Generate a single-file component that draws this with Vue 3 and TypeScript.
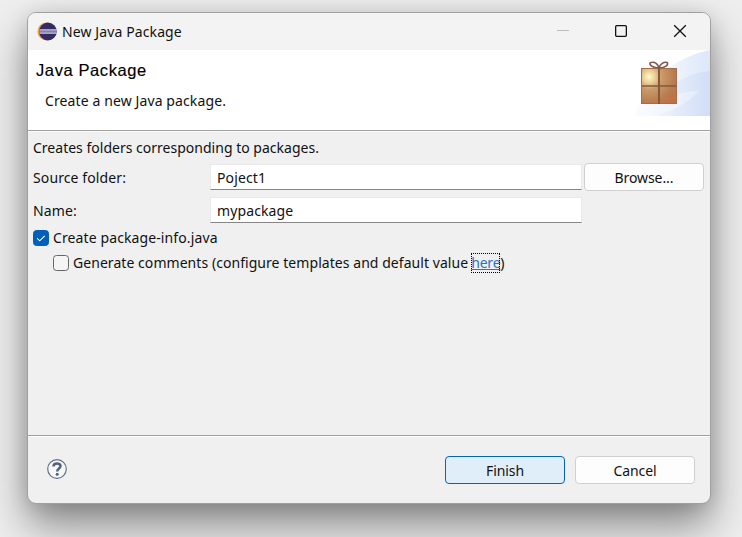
<script setup lang="ts">
import { ref } from 'vue'

const sourceFolder = ref('Poject1')
const packageName = ref('mypackage')
const createInfo = ref(true)
const generateComments = ref(false)
</script>

<template>
  <main class="desktop">
    <section class="dialog">
      <header class="titlebar">
        <svg class="logo" width="20" height="20" viewBox="0 0 20 20">
          <circle cx="9.400" cy="9.500" r="9" fill="#f4a04c" />
          <circle cx="10.900" cy="9.500" r="8.900" fill="#352a63" />
          <path d="M2.500 8h17M2.500 11h17" stroke="#cfcde2" stroke-width="1.500" />
          <path d="M2 9.500h18" stroke="#8580aa" stroke-width="1.500" />
        </svg>
        <span class="window-title">New Java Package</span>
        <svg class="controls" width="132" height="20" viewBox="0 0 132 20" fill="none">
          <path d="M0 8.500h12" stroke="#bdbdbd" />
          <rect x="58.650" y="3.650" width="10.700" height="10.700" rx="1" stroke="#111" stroke-width="1.3" />
          <path d="M117.200 3.200l11.600 11.600M128.800 3.200l-11.600 11.600" stroke="#111" stroke-width="1.3" />
        </svg>
      </header>

      <div class="banner">
        <div class="banner-text">
          <h1>Java Package</h1>
          <p>Create a new Java package.</p>
        </div>
        <svg class="art" width="75" height="66" viewBox="0 0 75 66">
          <defs>
            <linearGradient id="swoosh" x1="0" y1="0" x2="1" y2="0">
              <stop offset="0" stop-color="#fbfcff" />
              <stop offset=".55" stop-color="#eef3fc" />
              <stop offset="1" stop-color="#dde7f9" />
            </linearGradient>
            <linearGradient id="arc" x1="0" y1="0" x2="1" y2="0">
              <stop offset="0" stop-color="#ecf2fd" />
              <stop offset="1" stop-color="#cbd9f5" />
            </linearGradient>
            <radialGradient id="box" cx=".22" cy=".24" r=".95">
              <stop offset="0" stop-color="#fff8c8" />
              <stop offset=".15" stop-color="#efd7a0" />
              <stop offset=".38" stop-color="#c99b68" />
              <stop offset=".75" stop-color="#b97c4e" />
              <stop offset="1" stop-color="#bf7048" />
            </radialGradient>
          </defs>
          <path d="M0 66C9 35 36 8 75 0v66z" fill="url(#swoosh)" />
          <path d="M35 36C45 29 61 22 75 21v45H20C40 61 56 50 65 40C55 42 43 43 35 46z" fill="url(#arc)" opacity=".65" />
          <path d="M24 18C16 18 13 13 16 12.500C20 11.500 23 14 24 18C25 14 29 11.500 32 12.500C34 14 31 18 24 18" fill="none" stroke="#80574f" stroke-width="1.600" />
          <rect x="6.500" y="18.500" width="35" height="35" fill="url(#box)" stroke="#a26e4b" />
          <path d="M24 18v36" stroke="#85573f" stroke-width="2" />
          <path d="M7 36h34" stroke="#85573f" stroke-width="1.600" />
        </svg>
      </div>

      <div class="content">
        <p class="intro">Creates folders corresponding to packages.</p>
        <div class="field">
          <label for="source">Source folder:</label>
          <input id="source" v-model="sourceFolder" type="text" />
          <button type="button">Browse...</button>
        </div>
        <div class="field name-field">
          <label for="name">Name:</label>
          <input id="name" v-model="packageName" type="text" />
        </div>
        <label class="check">
          <input v-model="createInfo" type="checkbox" />
          <svg width="16" height="16" viewBox="0 0 16 16">
            <rect x=".5" y=".5" width="15" height="15" rx="3" :fill="createInfo ? '#005fb8' : '#f5f5f5'" :stroke="createInfo ? '#005fb8' : '#666'" />
            <path v-if="createInfo" d="M4.200 8.300l2.500 2.500 5-5" fill="none" stroke="#fff" stroke-width="1.100" />
          </svg>
          <span>Create package-info.java</span>
        </label>
        <div class="check nested">
          <label class="check-inner">
            <input v-model="generateComments" type="checkbox" />
            <svg width="16" height="16" viewBox="0 0 16 16">
              <rect x=".5" y=".5" width="15" height="15" rx="3" :fill="generateComments ? '#005fb8' : '#f5f5f5'" :stroke="generateComments ? '#005fb8' : '#666'" />
              <path v-if="generateComments" d="M4.200 8.300l2.500 2.500 5-5" fill="none" stroke="#fff" stroke-width="1.100" />
            </svg>
            <span class="comment-text">Generate comments (configure templates and default value</span>
          </label>
          <a href="#">here</a><span>)</span>
        </div>
      </div>

      <footer class="footer">
        <svg class="help" width="20" height="20" viewBox="0 0 20 20" fill="none">
          <circle cx="10" cy="10" r="9.300" fill="#f6f7f9" stroke="#64718a" stroke-width="1.200" />
          <path d="M6.500 7.500C6.500 3.400 13.600 3.500 13.500 7.200C13.400 9.500 10.200 9.500 10.200 12.500" stroke="#53617f" stroke-width="2.500" />
          <circle cx="10.200" cy="15.200" r="1.500" fill="#53617f" />
        </svg>
        <button type="button" class="primary">Finish</button>
        <button type="button">Cancel</button>
      </footer>
    </section>
  </main>
</template>

<style>
body {
  margin: 0;
  overflow: hidden;
}
</style>

<style scoped>
* {
  box-sizing: border-box;
}
.desktop {
  width: 742px;
  height: 537px;
  padding: 12px 31px 33px 27px;
  overflow: hidden;
  background: #eeeeee;
  font: 14px/20px "Noto Sans", "Open Sans", sans-serif;
  letter-spacing: 0.11px;
  color: #111;
}
.dialog {
  display: flex;
  flex-direction: column;
  width: 684px;
  height: 492px;
  overflow: hidden;
  border: 1px solid #a0a0a0;
  border-radius: 9px;
  background: #f0f0f0;
  box-shadow: 0 22px 42px rgba(0, 0, 0, 0.42), 0 2px 20px rgba(0, 0, 0, 0.12);
}
.titlebar {
  display: flex;
  align-items: center;
  flex: 0 0 37px;
  padding: 0 21px 0 9px;
  background: #f3f3f3;
}
.logo {
  margin-right: 5px;
}
.controls {
  margin-left: auto;
}
.banner {
  display: flex;
  justify-content: space-between;
  flex: 0 0 81px;
  padding-left: 8px;
  border-bottom: 1px solid #a0a0a0;
  background: #fff;
}
.banner-text {
  padding-top: 10px;
}
h1 {
  margin: 0;
  color: #000;
  font: 400 16.5px/20px "Liberation Sans", Arial, sans-serif;
  letter-spacing: 0.6px;
  -webkit-text-stroke: 0.15px #000;
}
.banner p {
  margin: 11px 0 0 9px;
}
.content {
  display: flex;
  flex-direction: column;
  flex: 0 0 304px;
  padding: 6px 6px 0 5px;
  border-top: 1px solid #fafafa;
}
.intro {
  margin: 0 0 5px;
  letter-spacing: 0.01px;
}
.field {
  display: grid;
  grid-template-columns: 177px 372px 120px;
  column-gap: 1px;
  align-items: center;
  height: 28px;
}
.field label {
  padding-top: 1px;
}
.name-field {
  margin-top: 5px;
}
.field input {
  width: 372px;
  height: 26px;
  margin-left: -1px;
  padding: 0 6px;
  border: 1px solid #e9e9e9;
  border-bottom-color: #868686;
  border-radius: 0;
  outline: 0;
  background: #fff;
  color: #111;
  font: inherit;
  letter-spacing: inherit;
}
button {
  width: 120px;
  height: 28px;
  padding: 2px 0 0;
  border: 1px solid #d0d0d0;
  border-radius: 4px;
  background: #fdfdfd;
  color: #111;
  font: inherit;
  letter-spacing: -0.1px;
}
.check,
.check-inner {
  display: flex;
  align-items: center;
}
.check {
  height: 20px;
  margin-top: 4px;
}
.check svg {
  margin-right: 4px;
}
.check input {
  position: absolute;
  opacity: 0;
  pointer-events: none;
}
.check.nested {
  margin: 5px 0 0 20px;
}
.comment-text {
  letter-spacing: 0.055px;
}
a {
  height: 20px;
  margin-left: 3px;
  outline: 1px dotted #000;
  outline-offset: -1px;
  color: #2a72bf;
  line-height: 20px;
  letter-spacing: -0.2px;
  text-decoration: underline;
}
.footer {
  display: flex;
  align-items: center;
  flex: 1;
  gap: 10px;
  padding: 1px 15px 0 19px;
  border-top: 1px solid #a0a0a0;
  box-shadow: inset 0 1px #fff;
}
.help {
  margin: 0 auto 2px 0;
}
.primary {
  border-color: #0067b8;
  background: #e0eef9;
}
</style>
